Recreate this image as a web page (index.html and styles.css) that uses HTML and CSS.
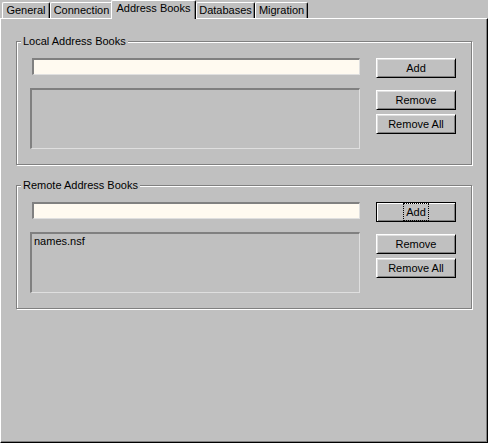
FILE: index.html
```html
<!DOCTYPE html>
<html lang="en">
<head>
    <meta charset="UTF-8">
    <title>Address Books</title>
    <link rel="stylesheet" href="styles.css">
</head>
<body>

    <div class="dialog">
        <div class="tabs">
            <div class="tab tab-general">General</div>
            <div class="tab tab-connection">Connection</div>
            <div class="tab active">Address Books</div>
            <div class="tab tab-databases">Databases</div>
            <div class="tab tab-migration">Migration</div>
        </div>

        <div class="page">
            <!-- Local books -->
            <fieldset class="group">
                <legend>Local Address Books</legend>
                <div class="group-body">
                    <div class="fields">
                        <input class="entry" type="text">
                        <div class="listbox"></div>
                    </div>
                    <div class="actions">
                        <button class="btn">Add</button>
                        <button class="btn btn-remove">Remove</button>
                        <button class="btn btn-all">Remove All</button>
                    </div>
                </div>
            </fieldset>

            <!-- Remote books -->
            <fieldset class="group group-remote">
                <legend>Remote Address Books</legend>
                <div class="group-body">
                    <div class="fields">
                        <input class="entry" type="text">
                        <div class="listbox">
                            <div class="list-item">names.nsf</div>
                        </div>
                    </div>
                    <div class="actions">
                        <button class="btn btn-default"><span class="focus">Add</span></button>
                        <button class="btn btn-remove">Remove</button>
                        <button class="btn btn-all">Remove All</button>
                    </div>
                </div>
            </fieldset>
        </div>
    </div>

</body>
</html>
```

FILE: styles.css
```css
body {
    margin: 0;
    background: #C0C0C0;
    font-family: "Liberation Sans", Arial, sans-serif;
    font-size: 11px;
    color: #000000;
}

.dialog {
    width: 488px;
    height: 443px;
    display: flex;
    flex-direction: column;
}

/* tab strip */
.tabs {
    height: 18px;
    flex-shrink: 0;
    display: flex;
    align-items: flex-end;
    padding-left: 2px;
}

.tab {
    box-sizing: border-box;
    height: 16px;
    line-height: 15px;
    padding: 0;
    text-align: center;
    border-top: 1px solid #FFFFFF;
    border-left: 1px solid #FFFFFF;
    border-right: 1px solid #000000;
    border-radius: 2px 2px 0 0;
    box-shadow: inset -1px 0 #808080;
    white-space: nowrap;
}

.tab-general { width: 48px; }
.tab-connection { width: 63px; }
.tab-databases { width: 59px; }
.tab-migration { width: 53px; }

.tab.active {
    width: 85px;
    height: 19px;
    line-height: 14px;
    margin: 0 0 -1px -2px;
    background: #C0C0C0;
    z-index: 1;
}

/* page body */
.page {
    flex: 1;
    border: 1px solid;
    border-color: #FFFFFF #000000 #000000 #FFFFFF;
    box-shadow: inset -1px -1px #808080;
    padding: 0 15px;
}

.group {
    margin: 16px 0 0 0;
    padding: 0;
    min-width: 0;
    border: 1px solid #808080;
    box-shadow: inset 1px 1px #FFFFFF, 1px 1px #FFFFFF;
}

.group-remote {
    margin-top: 14px;
}

.group legend {
    margin-left: 4px;
    padding: 0 2px;
    line-height: 13px;
    background: #C0C0C0;
}

.group-body {
    display: flex;
    gap: 16px;
    padding: 10px 15px 15px 13px;
}

.fields {
    width: 330px;
    display: flex;
    flex-direction: column;
}

.entry {
    box-sizing: border-box;
    width: 328px;
    height: 17px;
    margin: 0 0 0 2px;
    padding: 0 2px;
    background: #FFFAF0;
    border-style: solid;
    border-width: 2px 1px 1px 2px;
    border-color: #808080 #DFDFDF #DFDFDF #808080;
    outline: none;
    font: inherit;
}

.listbox {
    box-sizing: border-box;
    height: 61px;
    margin-top: 13px;
    padding: 1px 2px;
    border-style: solid;
    border-width: 2px 1px 1px 2px;
    border-color: #808080 #DFDFDF #DFDFDF #808080;
}

.list-item {
    line-height: 13px;
}

.actions {
    width: 80px;
    display: flex;
    flex-direction: column;
}

.btn {
    box-sizing: border-box;
    width: 80px;
    height: 20px;
    padding: 0;
    background: #C0C0C0;
    border: 1px solid;
    border-color: #FFFFFF #000000 #000000 #FFFFFF;
    box-shadow: inset 1px 1px #DFDFDF, inset -1px -1px #808080;
    font: inherit;
    color: #000000;
}

.btn-remove {
    margin-top: 12px;
}

.btn-all {
    margin-top: 4px;
}

.btn-default {
    border-color: #000000;
    box-shadow: inset 1px 1px #FFFFFF, inset -1px -1px #808080;
}

.focus {
    display: inline-block;
    height: 16px;
    line-height: 16px;
    padding: 0 2px;
    outline: 1px dotted #000000;
}
```
